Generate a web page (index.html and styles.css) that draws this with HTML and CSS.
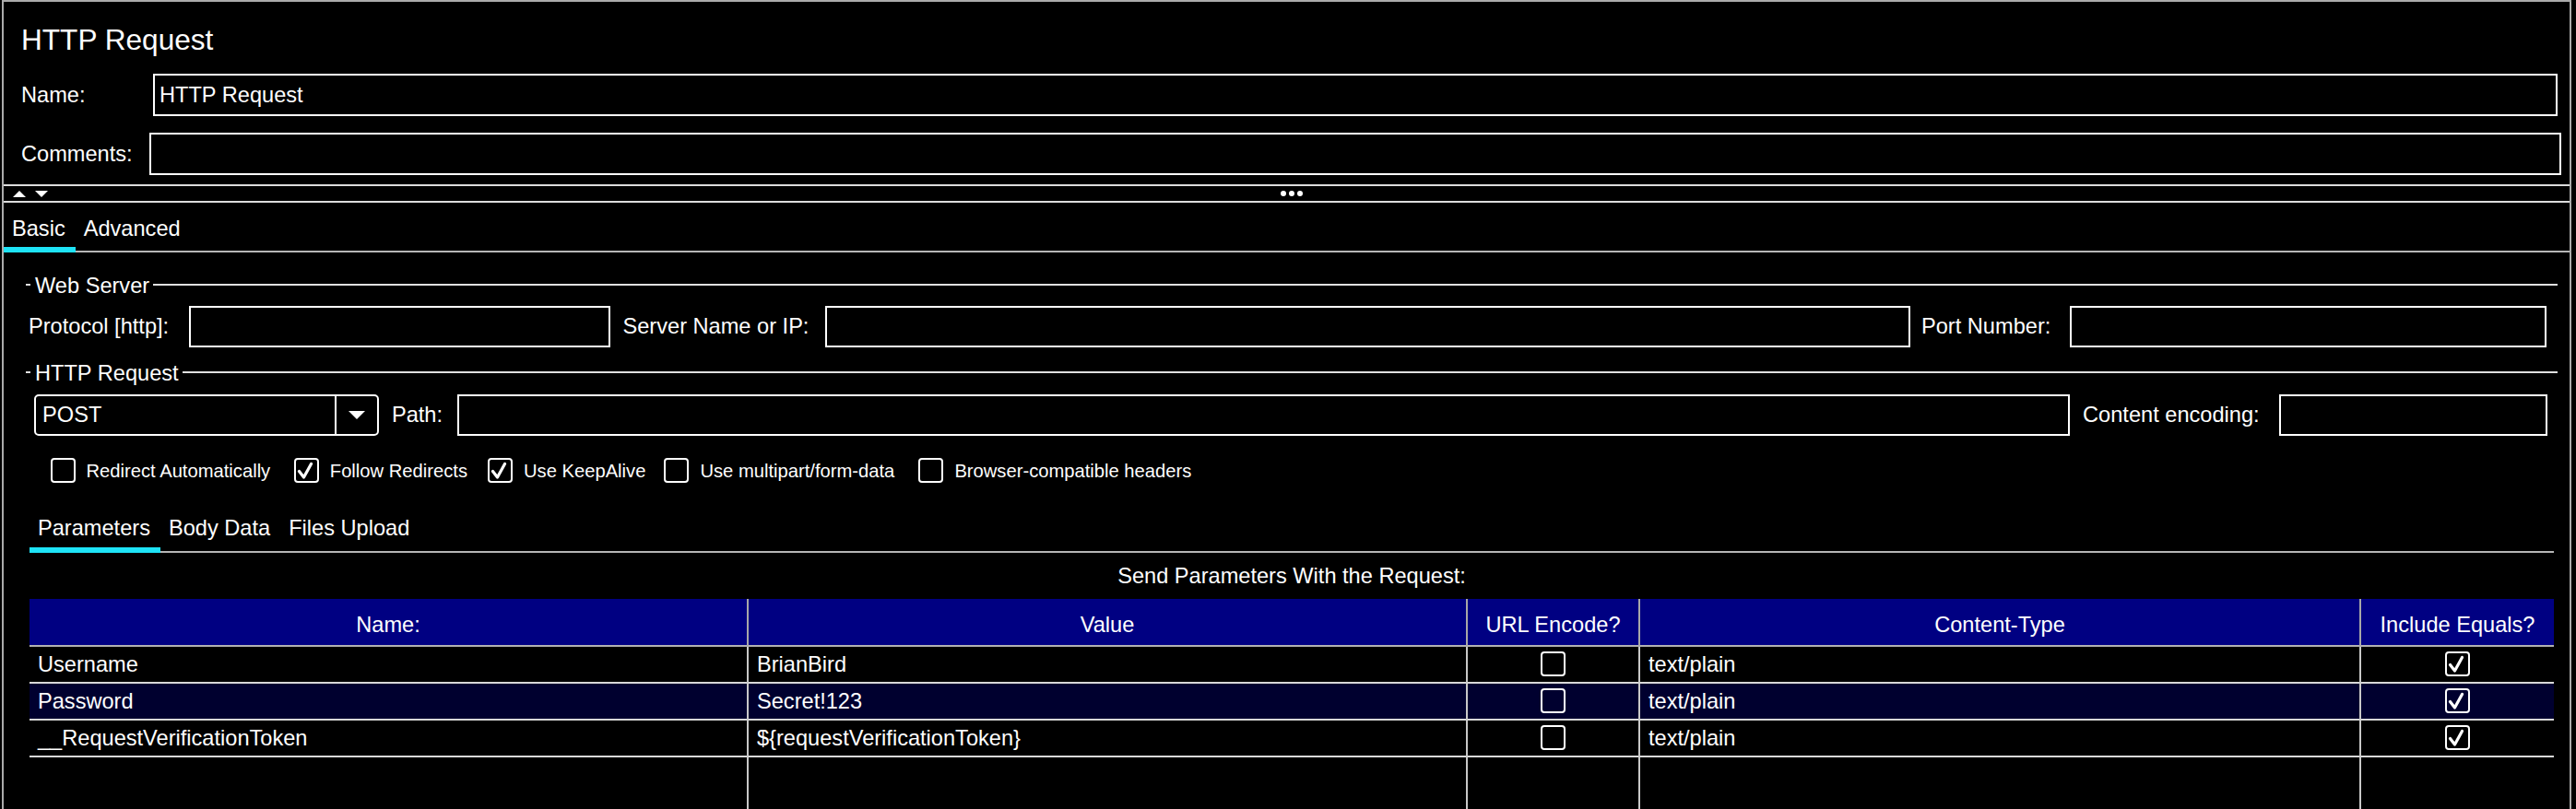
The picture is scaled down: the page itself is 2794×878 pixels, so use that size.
FILE: index.html
```html
<!DOCTYPE html>
<html lang="en">
<head>
<meta charset="utf-8">
<title>HTTP Request</title>
<link rel="stylesheet" href="styles.css">
</head>
<body>
<div class="window">
  <header class="header">
    <h1 class="title">HTTP Request</h1>
    <div class="form-row name-row">
      <label class="form-label">Name:</label>
      <div class="field">HTTP Request</div>
    </div>
    <div class="form-row comments-row">
      <label class="form-label">Comments:</label>
      <div class="field"></div>
    </div>
  </header>

  <div class="splitter">
    <div class="arrows"><span class="tri-up"></span><span class="tri-down"></span></div>
    <div class="grip"><span></span><span></span><span></span></div>
  </div>

  <nav class="tabs main-tabs">
    <span class="tab active">Basic</span>
    <span class="tab">Advanced</span>
  </nav>

  <main class="basic">
    <section class="group server-group">
      <div class="group-title"><span class="dash"></span><span class="group-name">Web Server</span><span class="rule"></span></div>
      <div class="server-row">
        <label class="lbl lbl-protocol">Protocol [http]:</label>
        <div class="field"></div>
        <label class="lbl lbl-server">Server Name or IP:</label>
        <div class="field"></div>
        <label class="lbl lbl-port">Port Number:</label>
        <div class="field"></div>
      </div>
    </section>

    <section class="group request-group">
      <div class="group-title"><span class="dash"></span><span class="group-name">HTTP Request</span><span class="rule"></span></div>
      <div class="request-row">
        <div class="combo">
          <span class="combo-value">POST</span>
          <span class="combo-btn"><span class="tri-down-lg"></span></span>
        </div>
        <label class="lbl lbl-path">Path:</label>
        <div class="field"></div>
        <label class="lbl lbl-enc">Content encoding:</label>
        <div class="field"></div>
      </div>

      <div class="options-row">
        <div class="option"><span class="cb"></span><span class="opt-label">Redirect Automatically</span></div>
        <div class="option"><span class="cb"><svg viewBox="0 0 23 23" class="check"><polyline points="3.5,12.5 8.5,19 16.5,4.5"/></svg></span><span class="opt-label">Follow Redirects</span></div>
        <div class="option"><span class="cb"><svg viewBox="0 0 23 23" class="check"><polyline points="3.5,12.5 8.5,19 16.5,4.5"/></svg></span><span class="opt-label">Use KeepAlive</span></div>
        <div class="option"><span class="cb"></span><span class="opt-label">Use multipart/form-data</span></div>
        <div class="option"><span class="cb"></span><span class="opt-label">Browser-compatible headers</span></div>
      </div>

      <div class="params">
        <nav class="tabs sub-tabs">
          <span class="tab active">Parameters</span>
          <span class="tab">Body Data</span>
          <span class="tab">Files Upload</span>
        </nav>
        <div class="caption">Send Parameters With the Request:</div>
        <div class="ptable">
          <div class="th">Name:</div>
          <div class="th">Value</div>
          <div class="th">URL Encode?</div>
          <div class="th">Content-Type</div>
          <div class="th">Include Equals?</div>

          <div class="td">Username</div>
          <div class="td">BrianBird</div>
          <div class="td center"><span class="cb"></span></div>
          <div class="td">text/plain</div>
          <div class="td center"><span class="cb"><svg viewBox="0 0 23 23" class="check"><polyline points="3.5,12.5 8.5,19 16.5,4.5"/></svg></span></div>

          <div class="td alt">Password</div>
          <div class="td alt">Secret!123</div>
          <div class="td alt center"><span class="cb"></span></div>
          <div class="td alt">text/plain</div>
          <div class="td alt center"><span class="cb"><svg viewBox="0 0 23 23" class="check"><polyline points="3.5,12.5 8.5,19 16.5,4.5"/></svg></span></div>

          <div class="td">__RequestVerificationToken</div>
          <div class="td">${requestVerificationToken}</div>
          <div class="td center"><span class="cb"></span></div>
          <div class="td">text/plain</div>
          <div class="td center"><span class="cb"><svg viewBox="0 0 23 23" class="check"><polyline points="3.5,12.5 8.5,19 16.5,4.5"/></svg></span></div>

          <div class="filler"></div>
          <div class="filler"></div>
          <div class="filler"></div>
          <div class="filler"></div>
          <div class="filler"></div>
        </div>
      </div>
    </section>
  </main>
</div>
</body>
</html>
```

FILE: styles.css
```css
* {
  box-sizing: border-box;
}

html,
body {
  margin: 0;
  padding: 0;
  background: #000;
  overflow: hidden;
}

body {
  width: 2794px;
  height: 878px;
  font-family: "Liberation Sans", Arial, Helvetica, sans-serif;
  font-size: 23.6px;
  color: #fff;
}

.window {
  margin-left: 2px;
  width: 2787px;
  height: 878px;
  border: 2px solid #ababab;
  border-bottom: none;
}

/* ---------- header ---------- */
.header {
  padding: 0 9px 0 19px;
}

.title {
  margin: 23px 0 0;
  font-size: 31.6px;
  font-weight: normal;
  line-height: 36px;
}

.form-row {
  display: flex;
  align-items: center;
  height: 46px;
}

.name-row {
  margin-top: 19px;
}

.comments-row {
  margin-top: 18px;
}

.form-label {
  flex: none;
  line-height: 46px;
  white-space: nowrap;
}

.name-row .form-label {
  width: 143px;
}

.comments-row .form-label {
  width: 139px;
}

.field {
  border: 2px solid #fff;
  padding-left: 5px;
  white-space: nowrap;
}

.form-row .field {
  flex: 1;
  height: 46px;
  line-height: 42px;
}

.name-row .field {
  margin-right: 4px;
}

/* ---------- splitter ---------- */
.splitter {
  margin-top: 10px;
  height: 20px;
  border-top: 2px solid #dcdcdc;
  border-bottom: 2px solid #dcdcdc;
  display: grid;
  grid-template-columns: 1fr auto 1fr;
  align-items: center;
  padding-left: 10px;
}

.arrows {
  display: flex;
  gap: 10px;
}

.tri-up {
  width: 0;
  height: 0;
  border-left: 7px solid transparent;
  border-right: 7px solid transparent;
  border-bottom: 7px solid #fff;
}

.tri-down {
  width: 0;
  height: 0;
  border-left: 7px solid transparent;
  border-right: 7px solid transparent;
  border-top: 7px solid #fff;
}

.grip {
  display: flex;
  gap: 3px;
}

.grip span {
  width: 6px;
  height: 6px;
  border-radius: 50%;
  background: #fff;
}

/* ---------- tabs ---------- */
.tabs {
  display: flex;
  height: 54px;
  box-shadow: inset 0 -2px 0 #b6b6b6;
}

.tab {
  padding: 13.5px 11px 6.5px 9px;
  line-height: 28px;
  border-bottom: 6px solid transparent;
  white-space: nowrap;
}

.tab.active {
  border-bottom-color: #1ee3f7;
}

/* ---------- basic panel ---------- */
.basic {
  padding: 0 13.5px 0 24px;
}

.group-title {
  display: flex;
  height: 28px;
  line-height: 28px;
}

.server-group .group-title {
  margin-top: 22.2px;
}

.request-group .group-title {
  margin-top: 13.9px;
}

.dash,
.rule {
  height: 2px;
  margin-top: 12px;
  background: #e0e0e0;
}

.dash {
  width: 5px;
  margin-right: 5px;
}

.rule {
  flex: 1;
  margin-left: 4px;
}

.group-name {
  white-space: nowrap;
}

.lbl {
  white-space: nowrap;
  line-height: 45px;
}

.server-row {
  margin-top: 8px;
  display: grid;
  grid-template-columns: 176.5px 457px 233px 1177px 173px 517px;
  height: 45px;
}

.lbl-protocol {
  padding-left: 3px;
}

.lbl-server {
  padding-left: 14px;
}

.lbl-port {
  padding-left: 12.5px;
}

.request-row {
  margin-top: 9px;
  padding-left: 8.6px;
  display: grid;
  grid-template-columns: 374px 85.7px 1749px 227px 290.6px;
  height: 45px;
}

.lbl-path {
  padding-left: 14.3px;
}

.lbl-enc {
  padding-left: 13.8px;
}

.combo {
  display: flex;
  border: 2px solid #fff;
  border-radius: 5px;
}

.combo-value {
  flex: 1;
  padding-left: 7.5px;
  line-height: 41px;
}

.combo-btn {
  width: 45.7px;
  border-left: 2px solid #fff;
  display: flex;
  align-items: center;
  justify-content: center;
}

.tri-down-lg {
  width: 0;
  height: 0;
  border-left: 9px solid transparent;
  border-right: 9px solid transparent;
  border-top: 9px solid #fff;
}

/* ---------- options ---------- */
.options-row {
  margin-top: 23.6px;
  padding-left: 26.5px;
  display: grid;
  grid-template-columns: 264.3px 210.2px 191.4px 276px auto;
  height: 29px;
}

.option {
  display: flex;
  align-items: flex-start;
  gap: 12px;
}

.opt-label {
  font-size: 20.2px;
  line-height: 29px;
  white-space: nowrap;
}

.cb {
  flex: none;
  display: block;
  width: 27px;
  height: 27px;
  border: 2px solid #fff;
  border-radius: 4px;
}

.check {
  display: block;
  width: 23px;
  height: 23px;
  fill: none;
  stroke: #fff;
  stroke-width: 3.2;
  stroke-linecap: round;
  stroke-linejoin: round;
}

/* ---------- parameters ---------- */
.params {
  margin: 20.3px 3.5px 0 4px;
}

.caption {
  margin-top: 11.2px;
  line-height: 28px;
  text-align: center;
}

.ptable {
  margin-top: 10.8px;
  display: grid;
  grid-template-columns: 778px 780px 187px 782px 211px;
}

.th,
.td,
.filler {
  border-left: 2px solid #c8c8c8;
  white-space: nowrap;
}

.ptable > :nth-child(5n + 1) {
  border-left: none;
}

.th {
  height: 52px;
  padding-top: 6px;
  line-height: 44px;
  text-align: center;
  background: #000082;
  border-left-color: #a8a8a8;
  border-bottom: 2px solid #b2b2b2;
}

.td {
  height: 40px;
  padding-left: 9px;
  line-height: 38px;
  border-bottom: 2px solid #d8d8d8;
}

.td.alt {
  background: #00002f;
}

.td.center {
  padding-left: 0;
  display: flex;
  align-items: center;
  justify-content: center;
}

.filler {
  height: 60px;
}
```
